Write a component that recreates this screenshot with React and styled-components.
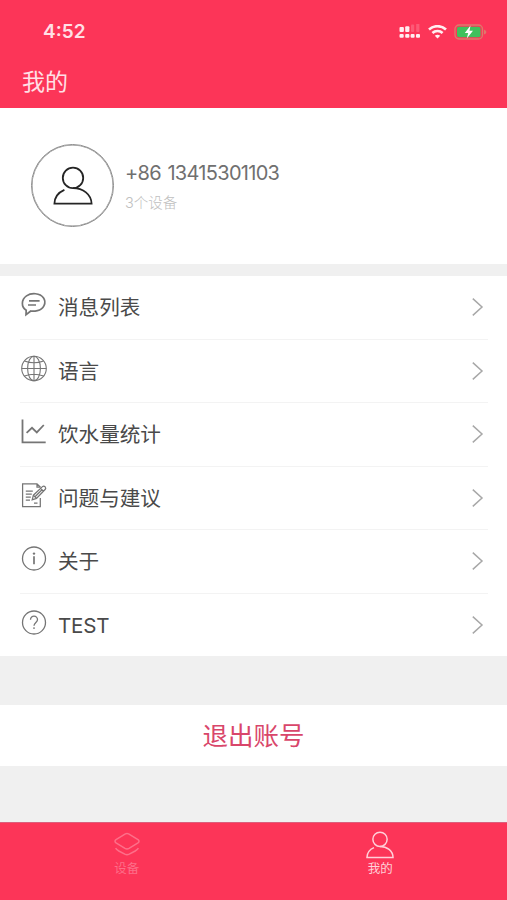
import React, { useState } from "react";
import styled, { createGlobalStyle } from "styled-components";

const GlobalStyle = createGlobalStyle`
* {
  box-sizing: border-box;
}
body {
  margin: 0;
  background: #f0f0f0;
  font-family: Inter, "Noto Sans CJK SC", sans-serif;
}
svg {
  display: block;
  flex: none;
}
`

const Screen = styled.div`
width: 100%;
height: 900px;
display: flex;
flex-flow: column;
background: #f0f0f0;
overflow: hidden;
`

const Header = styled.header`
height: 108px;
flex: none;
background: #fc3558;
color: #ffe0e6;
`

const StatusBar = styled.div`
height: 57px;
padding: 6px 20px 0 43px;
display: flex;
align-items: center;
justify-content: space-between;
`

const Clock = styled.span`
font-size: 19px;
font-weight: 600;
line-height: 24px;
`

const StatusIcons = styled.div`
display: flex;
align-items: center;
gap: 7px;
`

const Title = styled.h1`
margin: 0;
padding: 8px 0 0 22px;
font-size: 23px;
font-weight: 400;
line-height: 34px;
`

const Profile = styled.section`
height: 156px;
flex: none;
padding: 36px 0 0 31px;
display: flex;
align-items: flex-start;
background: #fff;
`

const Avatar = styled.div`
width: 83px;
height: 83px;
display: flex;
align-items: center;
justify-content: center;
border: 1px solid #8b8b8b;
box-shadow: inset 0 0 0 0.5px #8b8b8b;
border-radius: 50%;
color: #252525;
`

const ProfileText = styled.div`
padding: 15px 0 0 11px;
`

const Phone = styled.div`
font-size: 20px;
line-height: 28px;
letter-spacing: -0.7px;
word-spacing: 1.6px;
color: #707070;
white-space: nowrap;
`

const DeviceCount = styled.div`
margin-top: 5px;
font-size: 14.5px;
font-weight: 300;
line-height: 22px;
color: #c0c0c0;
`

const Menu = styled.ul`
height: 380px;
flex: none;
margin: 12px 0 0;
padding: 0;
display: flex;
flex-flow: column;
list-style: none;
background: #fff;
`

const MenuItem = styled.li`
flex: 1;
margin: 0 19px 0 20px;
padding-right: 4px;
display: flex;
align-items: center;
color: #505050;
cursor: pointer;
&:not(:last-child) {
  border-bottom: 1px solid #f3f3f3;
}
`

const MenuIcon = styled.svg`
margin: -5px 10px 0 0;
fill: none;
stroke: #757575;
stroke-width: ${({ $weight }) => $weight || 1.4};
`

const MenuLabel = styled.span`
flex: 1;
padding-top: 2px;
font-size: 20.6px;
line-height: 30px;
letter-spacing: ${({ $spacing }) => $spacing || "0"};
color: #4a4a4a;
`

const Logout = styled.button`
width: 100%;
height: 61px;
flex: none;
margin: 49px 0 0;
padding: 1px 0 0;
border: 0;
background: #fff;
color: #d9466a;
font-family: inherit;
font-size: 25.5px;
line-height: 38px;
`

const TabBar = styled.nav`
height: 78px;
flex: none;
margin-top: auto;
display: flex;
background: #fc3558;
border-top: 1px solid #dc5f7c;
`

const Tab = styled.button`
flex: 1;
padding: 8px 0 0;
display: flex;
flex-flow: column;
align-items: center;
border: 0;
background: none;
color: ${({ $active }) => ($active ? "#ffd0d9" : "#fd6f89")};
font-family: inherit;
font-size: 12.5px;
line-height: 18px;
`

const TabLabel = styled.span`
margin-top: 1px;
`

const Person = ({ width, height, weight }) => (
    <svg width={width} height={height} viewBox="0 0 40 40" fill="none" stroke="currentColor" strokeWidth={weight}>
        <circle cx="20" cy="11.9" r="10.2" />
        <path d="M11.4 23.8C5.8 26.2 1.6 31 1.4 37.7h37.2C38.3 28.2 30 22.1 20 22.1" />
    </svg>
)

const Layers = () => (
    <svg width="28" height="28" viewBox="0 0 28 28" fill="none" stroke="currentColor" strokeWidth="1.5" strokeLinejoin="round">
        <path d="M12.4 2.9Q14 2.1 15.6 2.9L25 8.6Q27 10.2 25 11.8L16 17.4Q14 18.4 12 17.4L3 11.8Q1 10.2 3 8.6Z" />
        <path d="M2.6 17.2Q3.4 18.6 5.8 20L11.8 23.2Q14 24.3 16.2 23.2L22.2 20Q24.6 18.6 25.4 17.2" />
    </svg>
)

const Signal = () => (
    <svg width="22" height="15" viewBox="0 0 22 15" fill="#ffeef1">
        <rect x="0.5" y="3" width="4.4" height="5" rx="1" />
        <rect x="6.2" y="2.2" width="4.2" height="5.8" rx="1" />
        <rect x="12" y="0.5" width="3.2" height="7.5" rx="1" opacity="0.2" />
        <rect x="17.2" y="-1.5" width="3.2" height="9.5" rx="1" opacity="0.2" />
        <rect x="0.5" y="10" width="4.2" height="3.7" rx="1" />
        <rect x="6.2" y="10" width="4.2" height="3.7" rx="1" />
        <rect x="11.6" y="10" width="4" height="3.7" rx="1" />
        <rect x="17" y="10" width="4" height="3.7" rx="1" />
    </svg>
)

const Wifi = () => (
    <svg width="19" height="14" viewBox="0 0 19 14" fill="none" stroke="#ffeef1" strokeWidth="2.5">
        <path d="M1 4.5C5.6 0 13.4 0 18 4.5" />
        <path d="M4.4 8c2.8-2.8 7.4-2.8 10.2 0" />
        <path d="M9.5 13.6 6.8 10.8q2.7-2.2 5.4 0z" fill="#ffeef1" stroke="none" />
    </svg>
)

const Battery = () => (
    <svg width="33" height="16" viewBox="0 0 33 16">
        <rect x="1" y="1" width="27.5" height="14" rx="4" fill="none" stroke="#dc7a6c" strokeWidth="1.3" />
        <rect x="3" y="2.8" width="23.5" height="10.4" rx="2" fill="#3fc15c" />
        <path d="M30 5.5q2.4 1 2.4 2.5T30 10.5z" fill="#dc7a6c" />
        <path d="M16.5 1.5 10.8 9h3.4l-1.4 5.5L19 6.8h-3.5z" fill="#fff" />
    </svg>
)

const Chevron = () => (
    <svg width="13" height="20" viewBox="0 0 13 20" fill="none" stroke="#a8a8a8" strokeWidth="1.5">
        <path d="M1.8 1.6 11 10l-9.2 8.4" />
    </svg>
)

const items = [
    {
        label: "消息列表",
        weight: 1.7,
        icon: (
            <>
                <path d="M6.2 19.2C0.9 15.8 1.2 8.6 6.5 4.9C11.4 1.5 20.1 2 23.4 6.8C27 11.8 23.5 18.1 17.4 19.6C14.8 20.2 12.4 20.2 10.8 20L6 23.7Z" />
                <path d="M9 9.9h10.6M8 14h8" />
            </>
        ),
    },
    {
        label: "语言",
        weight: 1.1,
        icon: (
            <>
                <circle cx="14" cy="13.5" r="12.3" />
                <ellipse cx="14" cy="13.5" rx="6.4" ry="12.3" />
                <path d="M14 1.2v24.6M1.7 13.5h24.6M4.4 6Q14 9.6 23.6 6M4.4 21Q14 17.4 23.6 21" />
            </>
        ),
    },
    {
        label: "饮水量统计",
        weight: 1.8,
        icon: <path d="M2.5 1.5v22.8h23.2M6.6 14.8l5.4-5 4.8 4.6L23.8 7" />,
    },
    {
        label: "问题与建议",
        weight: 1.25,
        icon: (
            <>
                <path d="M20.3 5.6V5L17 1.8H2.6V24.5h17.7V16M17 1.8V5h3.3M5.8 9h7M5.8 12h6M5.8 15h5M5.8 18h4.2M14 21h3.5" />
                <path d="m12.2 17.8 1.2-4.6L22.7 4.4q1.2-.8 2.4.4 1.2 1.3.2 2.5L16.5 16.4ZM13.4 13.2l3.1 3.2M20.6 6.4l3.2 3M15 14.8l7-7" />
            </>
        ),
    },
    {
        label: "关于",
        weight: 1.3,
        icon: (
            <>
                <circle cx="14" cy="13.5" r="11.5" />
                <circle cx="14" cy="8.6" r="1.2" fill="#757575" stroke="none" />
                <path d="M14 11.3v8" strokeWidth="1.7" />
            </>
        ),
    },
    {
        label: "TEST",
        weight: 1.3,
        spacing: "-0.2px",
        icon: (
            <>
                <circle cx="14" cy="13.5" r="11.5" />
                <path d="M10.5 10.7c0-4.8 7.2-4.6 7 .1 0 2.5-3.5 3-3.5 6M14 18.2v1.7" />
            </>
        ),
    },
]

const App = () => {
    const [tab, setTab] = useState("me")

    return (
        <Screen>
            <GlobalStyle />
            <Header>
                <StatusBar>
                    <Clock>4:52</Clock>
                    <StatusIcons>
                        <Signal />
                        <Wifi />
                        <Battery />
                    </StatusIcons>
                </StatusBar>
                <Title>我的</Title>
            </Header>
            <Profile>
                <Avatar>
                    <Person width={40} height={40} weight={1.8} />
                </Avatar>
                <ProfileText>
                    <Phone>+86 13415301103</Phone>
                    <DeviceCount>3个设备</DeviceCount>
                </ProfileText>
            </Profile>
            <Menu>
                {items.map(({ label, icon, weight, spacing }) => (
                    <MenuItem key={label}>
                        <MenuIcon width="28" height="27" viewBox="0 0 28 27" $weight={weight}>
                            {icon}
                        </MenuIcon>
                        <MenuLabel $spacing={spacing}>{label}</MenuLabel>
                        <Chevron />
                    </MenuItem>
                ))}
            </Menu>
            <Logout>退出账号</Logout>
            <TabBar>
                <Tab $active={tab === "devices"} onClick={() => setTab("devices")}>
                    <Layers />
                    <TabLabel>设备</TabLabel>
                </Tab>
                <Tab $active={tab === "me"} onClick={() => setTab("me")}>
                    <Person width={28} height={28} weight={2.1} />
                    <TabLabel>我的</TabLabel>
                </Tab>
            </TabBar>
        </Screen>
    )
}

export default App
